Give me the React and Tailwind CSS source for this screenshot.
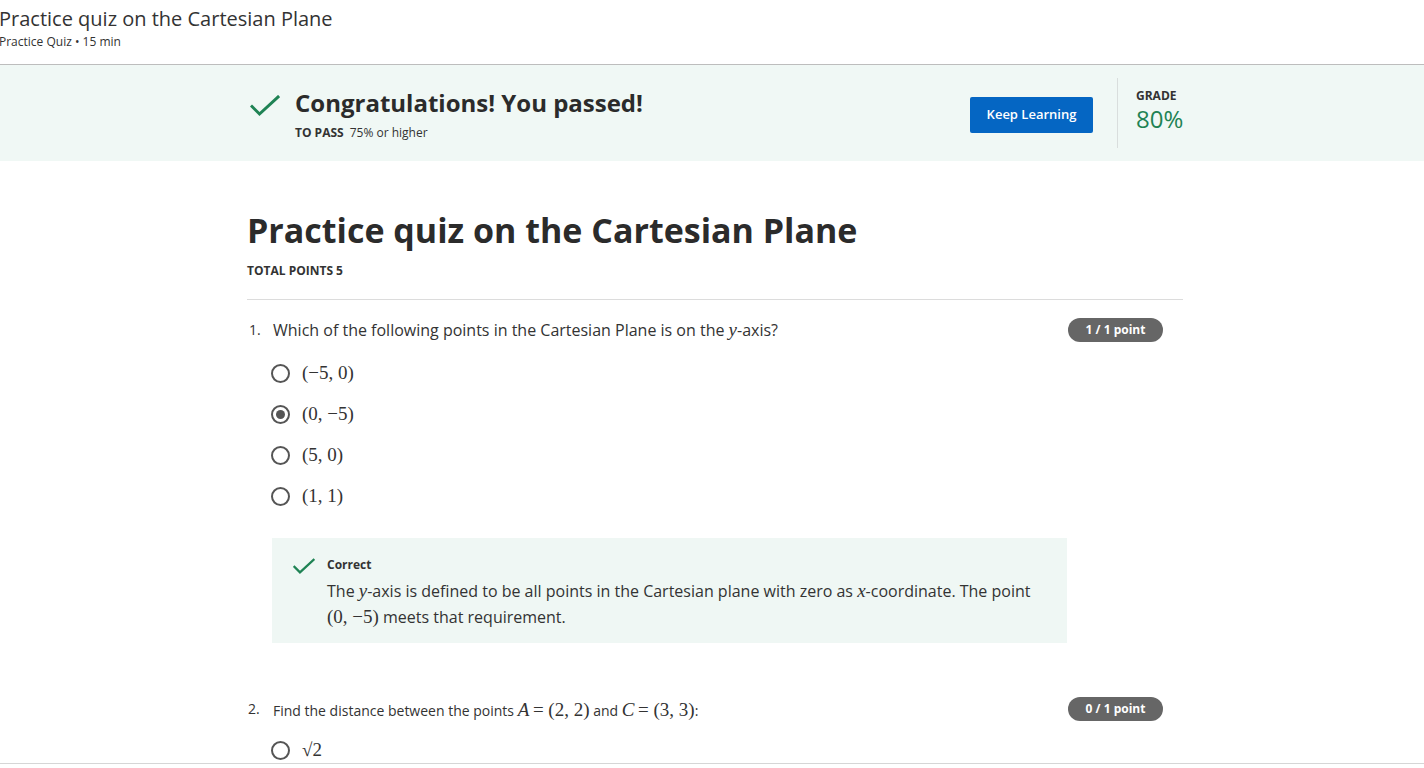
import React from 'react'

const sans = { fontFamily: '"Open Sans", "Noto Sans", sans-serif' }
const serif = 'font-["Liberation_Serif",serif]'

function Check({ className }) {
  return (
    <svg viewBox="0 0 30 22" className={className} fill="none">
      <path d="M2 11.5 L9.5 19 L28 2" stroke="#1f8354" strokeWidth="3" strokeLinecap="square" />
    </svg>
  )
}

function Radio({ selected }) {
  return (
    <span className="w-[19px] h-[19px] rounded-full border-2 border-[#555] flex items-center justify-center shrink-0">
      {selected && <span className="w-[9px] h-[9px] rounded-full bg-[#555]" />}
    </span>
  )
}

function M({ children }) {
  return <span className={`${serif} text-[19px]`}>{children}</span>
}

function V({ children }) {
  return <span className={`${serif} italic text-[19px]`}>{children}</span>
}

function Option({ selected, children }) {
  return (
    <div className="flex items-center gap-3 h-[41px] pl-[24px]">
      <Radio selected={selected} />
      <span className={`${serif} text-[19px] text-[#333]`}>{children}</span>
    </div>
  )
}

function Badge({ children }) {
  return (
    <span className="h-6 w-[95px] rounded-full bg-[#666] text-white text-xs font-bold flex items-center justify-center shrink-0">
      {children}
    </span>
  )
}

export default function App() {
  return (
    <div className="h-[768px] overflow-hidden bg-white text-[#333]" style={sans}>
      {/* top bar */}
      <header className="h-[65px] border-b border-[#bdbdbd] pt-[5px] -ml-px">
        <h1 className="text-[20px] leading-[28px] text-[#333]">Practice quiz on the Cartesian Plane</h1>
        <p className="text-xs leading-[18px] text-[#333]">Practice Quiz • 15 min</p>
      </header>

      <div className="h-[699px] border-b border-[#d6d6d6] overflow-hidden">
        {/* result banner */}
        <section className="h-[96px] bg-[#f0f8f5]">
          <div className="ml-[247px] w-[936px] h-full flex">
            <div className="flex-1 flex pt-[22px]">
              <Check className="w-[30px] h-[22px] mt-[8px] ml-[3px]" />
              <div className="ml-[15px]">
                <p className="text-[24px] leading-[32px] font-bold text-[#2b2b2b]">Congratulations! You passed!</p>
                <p className="text-xs mt-[6px]">
                  <span className="font-bold">TO PASS</span>
                  <span className="ml-[6px]">75% or higher</span>
                </p>
              </div>
            </div>
            <div className="pt-[32px]">
              <button className="h-9 w-[123px] bg-[#0566c3] rounded-[2px] text-white text-[13px] font-semibold">
                Keep Learning
              </button>
            </div>
            <div className="w-px bg-[#d9dedd] my-[13px] ml-[24px]" />
            <div className="w-[47px] ml-[18px] pt-[23px]">
              <p className="text-xs font-bold leading-4">GRADE</p>
              <p className="text-[24px] leading-[26px] mt-[2px] text-[#1f8354]">80%</p>
            </div>
          </div>
        </section>

        {/* quiz */}
        <main className="ml-[247px] w-[936px]">
          <h2 className="text-[34px] leading-[44px] font-bold text-[#2b2b2b] mt-[47px]">Practice quiz on the Cartesian Plane</h2>
          <p className="text-xs font-bold mt-[11px]">TOTAL POINTS 5</p>
          <div className="border-t border-[#dcdcdc] mt-[20px]" />

          <div className="flex items-center mt-[16px] pr-[20px]">
            <span className="text-sm w-[26px] pl-[2px]">1.</span>
            <p className="flex-1 text-base">
              Which of the following points in the Cartesian Plane is on the <V>y</V>-axis?
            </p>
            <Badge>1 / 1 point</Badge>
          </div>

          <div className="mt-[8px]">
            <Option>(−5, 0)</Option>
            <Option selected>(0, −5)</Option>
            <Option>(5, 0)</Option>
            <Option>(1, 1)</Option>
          </div>

          <div className="ml-[25px] w-[795px] h-[105px] bg-[#eff7f4] mt-[21px] flex pt-[19px] pl-[21px]">
            <Check className="w-[22px] h-[17px] mt-[1px]" />
            <div className="ml-[12px]">
              <p className="text-xs font-bold leading-[16px]">Correct</p>
              <p className="text-base leading-[25px] mt-[5px] text-[#333]">
                The <V>y</V>-axis is defined to be all points in the Cartesian plane with zero as <V>x</V>-coordinate. The point{' '}
                <br />
                <M>(0, −5)</M> meets that requirement.
              </p>
            </div>
          </div>

          <div className="flex items-center mt-[53px] pr-[20px]">
            <span className="text-sm w-[26px] pl-[1px]">2.</span>
            <p className="flex-1 text-sm">
              Find the distance between the points <V>A</V> <M>= (2, 2)</M> and <V>C</V> <M>= (3, 3)</M>:
            </p>
            <Badge>0 / 1 point</Badge>
          </div>

          <div className="mt-[7px]">
            <Option>√2</Option>
          </div>
        </main>
      </div>
    </div>
  )
}
